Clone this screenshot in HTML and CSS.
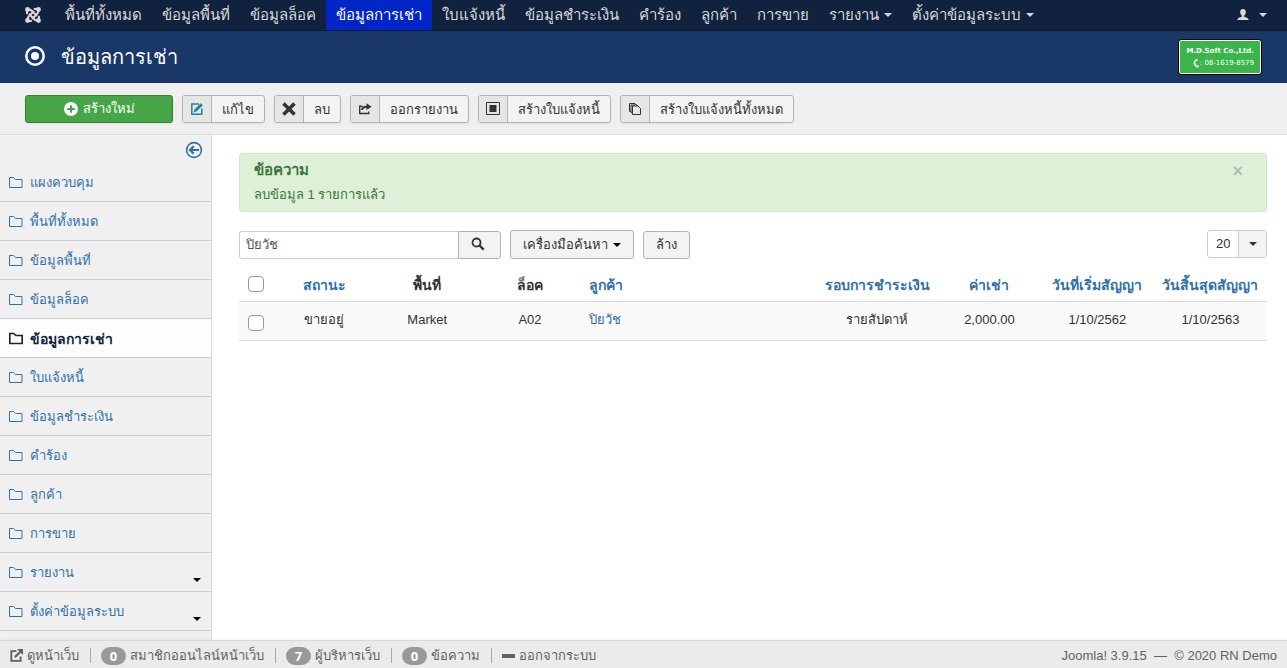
FILE: index.html
```html
<!DOCTYPE html>
<html lang="th">
<head>
<meta charset="utf-8">
<title>ข้อมูลการเช่า</title>
<link rel="stylesheet" href="styles.css">
</head>
<body>
<svg class="sprite" aria-hidden="true">
  <symbol id="folder" viewBox="0 0 14 14"><path d="M.5 11.500V1.500h4l2 2h6.500v8z" fill="none" stroke="currentColor"/></symbol>
  <symbol id="folder-bold" viewBox="0 0 14 14"><path d="M.8 11.500V1.500h4l2 2h6.400v8z" fill="none" stroke="currentColor" stroke-width="1.600"/></symbol>
</svg>
<nav class="navbar">
  <a class="brand" href="#" aria-label="Joomla">
    <svg width="16" height="16" viewBox="0 0 16 16" fill="none" stroke="currentColor" stroke-width="2.100"><path d="M2.500 7C1.500 5.500 2 4 3.300 3c1.500-.8 2.700 0 3.700 1l5 5M9 2.500c1.500-1 3-.5 4 .8.800 1.500 0 2.700-1 3.700l-5 5M13.500 9c1 1.500.5 3-.8 4-1.500.8-2.700 0-3.700-1L4 7M7 13.500c-1.500 1-3 .5-4-.8-.8-1.500 0-2.700 1-3.700l5-5"/><g fill="currentColor" stroke="none"><circle cx="2.500" cy="2.500" r="2.400"/><circle cx="13.500" cy="2.500" r="2.400"/><circle cx="2.500" cy="13.500" r="2.400"/><circle cx="13.500" cy="13.500" r="2.400"/></g></svg>
  </a>
  <ul class="menu">
    <li><a href="#">พื้นที่ทั้งหมด</a></li>
    <li><a href="#">ข้อมูลพื้นที่</a></li>
    <li><a href="#">ข้อมูลล็อค</a></li>
    <li><a class="active" href="#">ข้อมูลการเช่า</a></li>
    <li><a href="#">ใบแจ้งหนี้</a></li>
    <li><a href="#">ข้อมูลชำระเงิน</a></li>
    <li><a href="#">คำร้อง</a></li>
    <li><a href="#">ลูกค้า</a></li>
    <li><a href="#">การขาย</a></li>
    <li><a href="#">รายงาน <span class="caret"></span></a></li>
    <li><a href="#">ตั้งค่าข้อมูลระบบ <span class="caret"></span></a></li>
  </ul>
  <a class="user" href="#" aria-label="ผู้ใช้">
    <svg width="12" height="12" viewBox="0 0 12 12" fill="currentColor"><path d="M6 0C4.200 0 3.200 1.300 3.200 3c0 1.600.8 2.900 1.600 3.600v1.100C3 8.300.4 8.800.4 11h11.200c0-2.200-2.600-2.700-4.400-3.300V6.600C8 5.900 8.800 4.600 8.800 3 8.800 1.300 7.800 0 6 0z"/></svg>
    <span class="caret"></span>
  </a>
</nav>
<header class="header">
  <h1 class="title">
    <svg width="22" height="22" viewBox="0 0 22 22"><circle cx="11" cy="11" r="8.700" fill="none" stroke="currentColor" stroke-width="2.500"/><circle cx="11" cy="11" r="4" fill="currentColor"/></svg>
    ข้อมูลการเช่า
  </h1>
  <div class="company">
    <strong>M.D.Soft Co.,Ltd.</strong>
    <span class="phone"><svg width="6" height="9" viewBox="0 0 6 9" fill="none" stroke="currentColor" stroke-width="1.600"><path d="M3 1.500C.8 2 .5 6.500 5 8M2.500 1.500l2-.8M4.200 7.800l1.500-1"/></svg>: 08-1619-8579</span>
  </div>
</header>
<div class="toolbar">
  <button class="btn btn-new" type="button"><svg width="14" height="14" viewBox="0 0 13 13"><circle cx="6.500" cy="6.500" r="6.500" fill="#fff"/><path d="M6.500 3v7M3 6.500h7" stroke="#46a546" stroke-width="1.800"/></svg>สร้างใหม่</button>
  <button class="btn" type="button"><span class="ico teal"><svg width="14" height="14" viewBox="0 0 14 14" fill="none" stroke="currentColor"><path d="M9 2H1.800v10.200h10V6.500" stroke-width="1.500"/><path d="M5.500 8.500L11.800 2.200" stroke-width="3"/><path d="M3.500 10.500l.8-3 2.200 2.200z" fill="currentColor" stroke="none"/></svg></span><span class="lbl">แก้ไข</span></button>
  <button class="btn" type="button"><span class="ico"><svg width="14" height="14" viewBox="0 0 14 14"><path d="M1.500 1.500l11 11M12.500 1.500l-11 11" stroke="currentColor" stroke-width="3.600"/></svg></span><span class="lbl">ลบ</span></button>
  <button class="btn" type="button"><span class="ico"><svg width="14" height="14" viewBox="0 0 14 14" fill="none" stroke="currentColor"><path d="M4.500 4.200H1.700v7.300h9V9.500" stroke-width="1.400"/><path d="M4 8c.3-2.500 2-3.300 5-3.300" stroke-width="1.900"/><path d="M8.500 1.300v6.800L13.500 4.700z" fill="currentColor" stroke="none"/></svg></span><span class="lbl">ออกรายงาน</span></button>
  <button class="btn" type="button"><span class="ico"><svg width="14" height="14" viewBox="0 0 14 14"><path d="M.5.5h13v12H.5z" fill="none" stroke="currentColor"/><path d="M3.500 3h7v7h-7z" fill="currentColor"/></svg></span><span class="lbl">สร้างใบแจ้งหนี้</span></button>
  <button class="btn" type="button"><span class="ico"><svg width="14" height="14" viewBox="0 0 14 14" fill="#e6e6e6" stroke="currentColor"><path d="M1.500 9.500v-8h5.500l1.500 1.500v6.500z"/><path d="M3 10.500v-7.500h6l1 1.500v6z"/><path d="M4.500 12.500v-8.500h5.500l2.500 2.500v6z"/></svg></span><span class="lbl">สร้างใบแจ้งหนี้ทั้งหมด</span></button>
</div>
<div class="content">
  <aside class="sidebar">
    <button class="collapse" type="button" aria-label="ซ่อนแถบข้าง"><svg width="18" height="18" viewBox="0 0 18 18" fill="none" stroke="currentColor"><circle cx="9" cy="9" r="7.400" stroke-width="1.600"/><path d="M14 9H5.500M8.800 5.200L5 9l3.800 3.800" stroke-width="2.200"/></svg></button>
    <ul>
      <li><a href="#"><svg><use href="#folder"/></svg>แผงควบคุม</a></li>
      <li><a href="#"><svg><use href="#folder"/></svg>พื้นที่ทั้งหมด</a></li>
      <li><a href="#"><svg><use href="#folder"/></svg>ข้อมูลพื้นที่</a></li>
      <li><a href="#"><svg><use href="#folder"/></svg>ข้อมูลล็อค</a></li>
      <li><a class="current" href="#"><svg><use href="#folder-bold"/></svg>ข้อมูลการเช่า</a></li>
      <li><a href="#"><svg><use href="#folder"/></svg>ใบแจ้งหนี้</a></li>
      <li><a href="#"><svg><use href="#folder"/></svg>ข้อมูลชำระเงิน</a></li>
      <li><a href="#"><svg><use href="#folder"/></svg>คำร้อง</a></li>
      <li><a href="#"><svg><use href="#folder"/></svg>ลูกค้า</a></li>
      <li><a href="#"><svg><use href="#folder"/></svg>การขาย</a></li>
      <li><a href="#"><svg><use href="#folder"/></svg>รายงาน<span class="caret"></span></a></li>
      <li><a href="#"><svg><use href="#folder"/></svg>ตั้งค่าข้อมูลระบบ<span class="caret"></span></a></li>
    </ul>
  </aside>
  <main class="main">
    <div class="alert" role="status">
      <div>
        <h2>ข้อความ</h2>
        <p>ลบข้อมูล 1 รายการแล้ว</p>
      </div>
      <button class="close" type="button" aria-label="ปิด">×</button>
    </div>
    <form class="filters">
      <div class="search">
        <input type="text" value="ปิยวัช" aria-label="ค้นหา">
        <button type="button" aria-label="ค้นหา"><svg width="14" height="14" viewBox="0 0 14 14" fill="none" stroke="currentColor"><circle cx="5.500" cy="5.500" r="4" stroke-width="1.800"/><path d="M8.500 8.500l4.200 4.200" stroke-width="2.400"/></svg></button>
      </div>
      <button class="tool tool-menu" type="button">เครื่องมือค้นหา<span class="caret"></span></button>
      <button class="tool" type="button">ล้าง</button>
      <div class="limit"><select aria-label="จำนวนรายการ"><option>20</option></select><span class="arrow"><span class="caret"></span></span></div>
    </form>
    <table class="list">
      <colgroup><col class="c-check"><col class="c-mid"><col class="c-mid"><col class="c-mid"><col><col class="c-cycle"><col class="c-mid"><col class="c-date"><col class="c-date"></colgroup>
      <thead>
        <tr><th><input type="checkbox" aria-label="เลือกทั้งหมด"></th><th><a href="#">สถานะ</a></th><th>พื้นที่</th><th>ล็อค</th><th class="left"><a href="#">ลูกค้า</a></th><th><a href="#">รอบการชำระเงิน</a></th><th><a href="#">ค่าเช่า</a></th><th><a href="#">วันที่เริ่มสัญญา</a></th><th><a href="#">วันสิ้นสุดสัญญา</a></th></tr>
      </thead>
      <tbody>
        <tr><td><input type="checkbox" aria-label="เลือก ปิยวัช"></td><td>ขายอยู่</td><td>Market</td><td>A02</td><td class="left"><a href="#">ปิยวัช</a></td><td>รายสัปดาห์</td><td>2,000.00</td><td>1/10/2562</td><td>1/10/2563</td></tr>
      </tbody>
    </table>
  </main>
</div>
<footer class="status">
  <a href="#"><svg width="13" height="13" viewBox="0 0 12 12" fill="none" stroke="currentColor"><path d="M6 2H1.200v9h8.600V7" stroke-width="1.700"/><path d="M4.500 7.500l5-5" stroke-width="2"/><path d="M6.500 0H12v5.500z" fill="currentColor" stroke="none"/></svg>ดูหน้าเว็บ</a>
  <span><b class="badge">0</b>สมาชิกออนไลน์หน้าเว็บ</span>
  <span><b class="badge">7</b>ผู้บริหารเว็บ</span>
  <a href="#"><b class="badge">0</b>ข้อความ</a>
  <a href="#"><i class="dash"></i>ออกจากระบบ</a>
  <p>Joomla! 3.9.15 &nbsp;—&nbsp; © 2020 RN Demo</p>
</footer>
</body>
</html>
```
FILE: styles.css
```css
* { box-sizing: border-box; }
body {
  margin: 0;
  height: 100vh;
  display: flex;
  flex-direction: column;
  overflow: hidden;
  font: 13px/18px "Liberation Sans", Arial, sans-serif;
  color: #333;
  background: #fff;
}
a { color: #3071a9; text-decoration: none; }
ul { list-style: none; margin: 0; padding: 0; }
svg { flex: none; }
button, input, select { font: inherit; color: inherit; }
.sprite { display: none; }
.caret {
  display: inline-block;
  border: 4px solid transparent;
  border-top-color: currentColor;
  border-bottom: 0;
}

.navbar {
  display: flex;
  flex: none;
  height: 31px;
  padding: 0 20px 0 25px;
  background: #10223e;
  border-bottom: 1px solid #0c192e;
}
.navbar a { display: flex; align-items: center; color: #d9d9d9; }
.brand { margin-right: 14px; }
.menu { display: flex; flex: 1; font-size: 15px; white-space: nowrap; }
.menu a { height: 30px; padding: 0 10px; }
.menu .caret { margin-left: 5px; }
.navbar .active { background: #0026c8; color: #fff; }
.user { gap: 10px; }

.header {
  display: flex;
  flex: none;
  align-items: center;
  justify-content: space-between;
  height: 52px;
  padding: 0 25px 0 24px;
  background: #1a3867;
  color: #fff;
}
.title {
  display: flex;
  align-items: center;
  gap: 15px;
  margin: 0;
  font-size: 20px;
  font-weight: normal;
  line-height: 28px;
}
.title svg { margin-bottom: 3px; }
.company {
  display: flex;
  flex-direction: column;
  justify-content: center;
  align-items: flex-end;
  height: 36px;
  min-width: 84px;
  padding: 0 7px;
  border: 1px solid #000;
  border-radius: 3px;
  box-shadow: inset 0 0 0 1px #fff;
  background: #39b54a;
  font: 7px/12px "DejaVu Sans", Verdana, sans-serif;
  white-space: nowrap;
}
.phone { display: flex; align-items: center; gap: 1px; }

.toolbar {
  display: flex;
  flex: none;
  gap: 9px;
  padding: 12px 25px 11px;
  background: #efefef;
  border-bottom: 1px solid #dcdcdc;
}
.btn {
  display: flex;
  align-items: stretch;
  height: 28px;
  padding: 0;
  border: 1px solid #b3b3b3;
  border-radius: 3px;
  background: #f3f3f3;
  box-shadow: 0 1px 2px rgba(0, 0, 0, .05);
  overflow: hidden;
  white-space: nowrap;
}
.btn-new {
  width: 148px;
  align-items: center;
  justify-content: center;
  gap: 5px;
  background: #46a546;
  border-color: #378137;
  color: #fff;
}
.ico {
  display: grid;
  place-items: center;
  width: 29px;
  background: #e6e6e6;
  border-right: 1px solid #b3b3b3;
}
.teal { color: #24809a; }
.lbl { padding: 1px 10px 0; line-height: 25px; }

.content { display: flex; flex: 1; min-height: 0; }
.sidebar {
  width: 212px;
  flex: none;
  overflow: hidden;
  background: #f0f0f0;
  border-right: 1px solid #d9d9d9;
}
.collapse {
  display: block;
  margin: 6px 8px 4px auto;
  padding: 0;
  height: 18px;
  border: 0;
  background: none;
  color: #3071a9;
}
.collapse svg { display: block; }
.sidebar a {
  display: flex;
  align-items: center;
  gap: 7px;
  height: 39px;
  padding: 1px 10px 0 9px;
  border-bottom: 1px solid #ccc;
}
.sidebar a svg { width: 14px; height: 14px; }
.sidebar .caret { align-self: flex-end; margin: 0 0 9px auto; color: #000; }
.sidebar .current { background: #fdfdfd; color: #10223e; font-size: 14px; font-weight: bold; }

.main { flex: 1; min-width: 0; padding: 18px 20px 0 27px; }
.alert {
  display: flex;
  justify-content: space-between;
  padding: 6px 23px 6px 14px;
  border: 1px solid #d0e9c6;
  border-radius: 3px;
  background: #dff0d8;
  color: #3c763d;
}
.alert h2 { margin: 0 0 5px; font-size: 15px; line-height: 20px; }
.alert p { margin: 0; line-height: 20px; }
.close {
  align-self: flex-start;
  padding: 0;
  border: 0;
  background: none;
  font-size: 18px;
  font-weight: bold;
  line-height: 22px;
  color: #b3c0ad;
}

.filters { display: flex; align-items: flex-end; gap: 9px; margin-top: 18px; }
.search { display: flex; }
.search input {
  width: 220px;
  height: 28px;
  padding: 0 6px 2px;
  border: 1px solid #ccc;
  border-radius: 3px 0 0 3px;
  color: #555;
}
.search button {
  width: 43px;
  height: 28px;
  margin-left: -1px;
  padding: 0 4px 3px 0;
  border: 1px solid #b3b3b3;
  border-radius: 0 3px 3px 0;
  background: #f3f3f3;
}
.search svg { vertical-align: middle; }
.tool {
  height: 28px;
  padding: 0 12px;
  border: 1px solid #b3b3b3;
  border-radius: 3px;
  background: #f3f3f3;
  white-space: nowrap;
}
.tool-menu { height: 29px; }
.tool .caret { margin-left: 5px; vertical-align: middle; color: #000; }
.limit {
  display: flex;
  align-self: flex-start;
  width: 60px;
  height: 28px;
  margin-left: auto;
  border: 1px solid #ccc;
  border-radius: 3px;
}
.limit select {
  flex: 1;
  min-width: 0;
  appearance: none;
  padding: 0 8px;
  border: 0;
  background: none;
}
.arrow {
  display: grid;
  place-items: center;
  width: 28px;
  background: #f3f3f3;
  border-left: 1px solid #ccc;
}

.list { width: 100%; margin-top: 8px; border-collapse: collapse; table-layout: fixed; }
.list th, .list td {
  padding: 9px 0 7px;
  text-align: center;
  vertical-align: top;
  white-space: nowrap;
}
.list th { font-size: 14px; }
.list tr { height: 39px; }
.list thead tr { height: 34px; }
.list tbody tr { background: #f9f9f9; border-top: 1px solid #ddd; border-bottom: 1px solid #ddd; }
.list .left { text-align: left; padding-left: 8px; }
.list input {
  appearance: none;
  display: block;
  width: 16px;
  height: 16px;
  margin: 0 auto;
  border: 1px solid #999;
  border-radius: 4px;
  background: #fff;
}
.list td input { margin-top: 4px; }
.c-check { width: 34px; }
.c-mid { width: 10%; }
.c-cycle { width: 122px; }
.c-date { width: 11%; }

.status {
  display: flex;
  flex: none;
  align-items: center;
  height: 28px;
  padding: 2px 10px 0;
  border-top: 1px solid #d9d9d9;
  background: #ebebeb;
  color: #626262;
  white-space: nowrap;
  box-shadow: 0 0 4px rgba(0, 0, 0, .08);
  z-index: 1;
}
.status > a, .status > span { display: flex; align-items: center; gap: 4px; color: inherit; }
.status > * + :not(p)::before {
  content: "";
  width: 1px;
  height: 15px;
  margin: 0 6px 0 11px;
  background: #a8a8a8;
}
.status p { margin: 0 0 0 auto; }
.badge {
  min-width: 25px;
  border-radius: 9px;
  background: #999;
  color: #fff;
  font: bold 13px/18px "Open Sans", sans-serif;
  text-align: center;
}
.dash { width: 13px; height: 4px; background: #626262; }
```
